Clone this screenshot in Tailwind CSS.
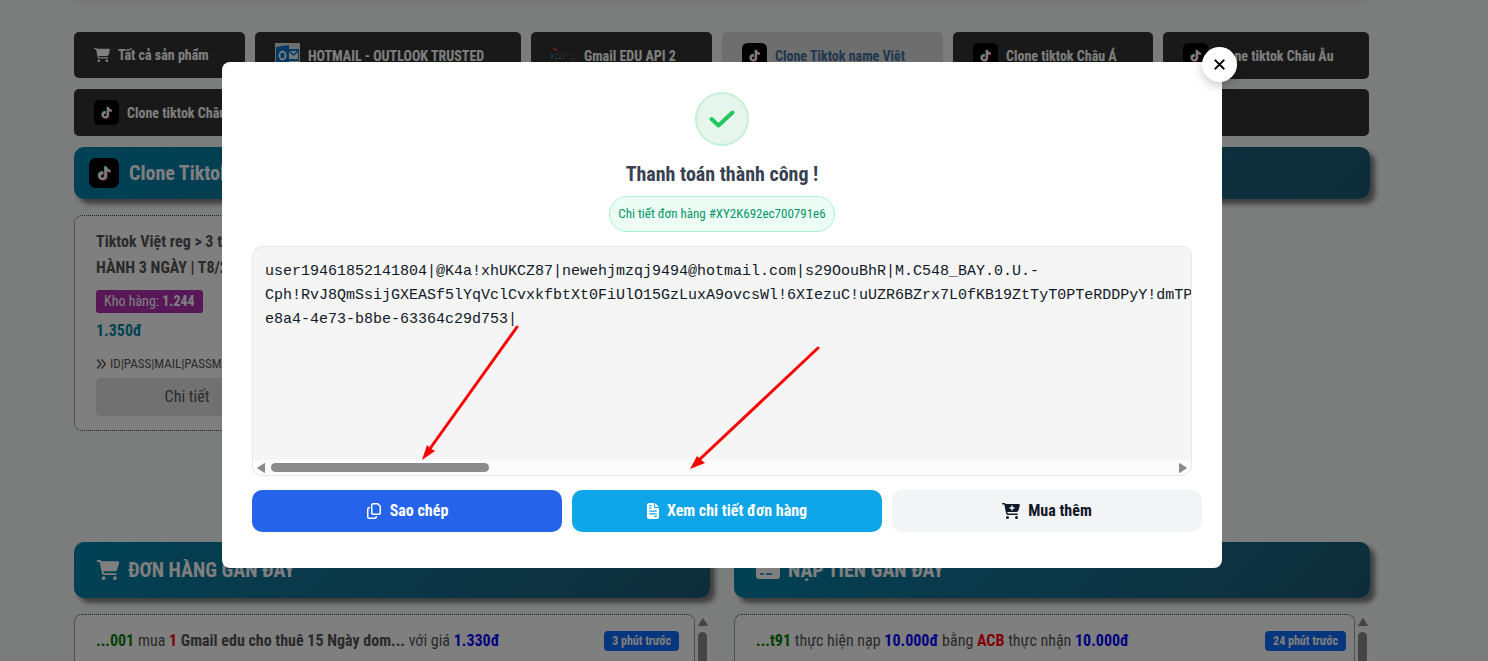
<!DOCTYPE html>
<html lang="vi">
<head>
  <meta charset="UTF-8" />
  <meta name="viewport" content="width=device-width, initial-scale=1.0"/>
  <title>Thanh toán thành công</title>
  <script src="https://cdn.jsdelivr.net/npm/@tailwindcss/browser@4"></script>
</head>
<body class="bg-[#f7faf8] font-['Liberation_Sans_Narrow','Roboto_Condensed',Roboto,sans-serif] text-base text-[#555] h-screen overflow-hidden">

  <!-- Shared icons -->
  <svg class="hidden">
    <symbol id="cart" viewBox="0 0 576 512"><path d="M0 24C0 10.7 10.7 0 24 0H69.5c22 0 41.5 12.8 50.6 32h411c26.3 0 45.5 25 38.6 50.4l-41 152.3c-8.5 31.4-37 53.3-69.5 53.3H170.7l5.4 28.5c2.2 11.3 12.1 19.5 23.6 19.5H488c13.3 0 24 10.7 24 24s-10.7 24-24 24H199.7c-34.6 0-64.3-24.6-70.7-58.5L77.4 54.5c-.7-3.8-4-6.5-7.9-6.5H24C10.7 48 0 37.3 0 24zM128 464a48 48 0 1 1 96 0 48 48 0 1 1 -96 0zm336-48a48 48 0 1 1 0 96 48 48 0 1 1 0-96z"/></symbol>
    <symbol id="note" viewBox="0 0 24 24"><path d="M12.525.02c1.31-.02 2.61-.01 3.91-.02.08 1.53.63 3.09 1.75 4.17 1.12 1.11 2.7 1.62 4.24 1.79v4.03c-1.44-.05-2.89-.35-4.2-.97-.57-.26-1.1-.59-1.62-.93-.01 2.92.01 5.84-.02 8.75-.08 1.4-.54 2.79-1.35 3.94-1.31 1.92-3.58 3.17-5.91 3.21-1.43.08-2.86-.31-4.08-1.03-2.02-1.19-3.44-3.37-3.65-5.71-.02-.5-.03-1-.01-1.49.18-1.9 1.12-3.72 2.58-4.96 1.66-1.44 3.98-2.13 6.15-1.72.02 1.48-.04 2.96-.04 4.44-.99-.32-2.15-.23-3.02.37-.63.41-1.11 1.04-1.36 1.75-.21.51-.15 1.07-.14 1.61.24 1.64 1.82 3.02 3.5 2.87 1.12-.01 2.19-.66 2.77-1.61.19-.33.4-.67.41-1.06.1-1.79.06-3.57.07-5.36.01-4.03-.01-8.05.02-12.07z"/></symbol>
    <symbol id="tiktok" viewBox="0 0 50 50">
      <rect width="50" height="50" rx="11" fill="#000"/>
      <use href="#note" x="13" y="13" width="23" height="23" fill="#25f4ee"/>
      <use href="#note" x="15" y="15" width="23" height="23" fill="#fe2c55"/>
      <use href="#note" x="14" y="14" width="23" height="23" fill="#fff"/>
    </symbol>
    <symbol id="arrow-up" viewBox="0 0 10 8"><path d="M5 0.500L9.500 7.500H0.500Z" stroke="currentColor" stroke-linejoin="round" fill="currentColor"/></symbol>
  </svg>

  <main class="h-full flex flex-col pl-[74px] pr-[118px]">
    <div class="h-0 mb-8 mx-1 shrink-0 shadow-[0_0_8px_1px_rgba(0,0,0,0.25)]"></div>

    <!-- Category tabs -->
    <nav class="mr-px shrink-0 grid grid-cols-[171fr_266fr_181fr_221fr_200fr_206fr] gap-[10px] text-sm font-bold text-white whitespace-nowrap">
      <a href="#" class="flex items-center gap-2 h-[46px] px-5 rounded-[5px] bg-[#333]">
        <svg class="w-4 h-4 fill-current"><use href="#cart"/></svg>Tất cả sản phẩm
      </a>
      <a href="#" class="flex items-center gap-2 h-[47px] px-5 rounded-[5px] bg-[#333]">
        <svg class="w-[25px] h-[25px]" viewBox="0 0 25 25">
          <rect width="25" height="25" fill="#ddd"/>
          <rect x="11" y="6" width="13" height="12" fill="#0a72c8"/>
          <path d="M14 8h9v8h-9z" fill="#e8eef5"/><path d="M14 8l4.500 4L23 8" stroke="#0a72c8" fill="none" stroke-width="1.500"/>
          <path d="M1 4L14 2V23L1 21Z" fill="#0a72c8"/>
          <ellipse cx="7.500" cy="12.500" rx="3" ry="4" stroke="#fff" stroke-width="1.800" fill="none"/>
        </svg>HOTMAIL - OUTLOOK TRUSTED
      </a>
      <a href="#" class="flex items-center gap-2 h-[47px] px-5 rounded-[5px] bg-[#333]">
        <svg class="w-[25px] h-[25px]" viewBox="0 0 25 25">
          <path d="M2 5h2v2H2z" fill="#d33"/><path d="M4 6h2v2H4z" fill="#c62"/><path d="M0 10l2 2v3H0z" fill="#27c"/>
          <path d="M3 11h6M11 11h10" stroke="#555" stroke-width="1"/><path d="M5 13h11" stroke="#444"/>
          <path d="M4 15.500h2M8 15.500h2M12 15.500h1" stroke="#5a8"/><path d="M20 16h4" stroke="#474"/>
        </svg>Gmail EDU API 2
      </a>
      <a href="#" class="flex items-center gap-2 h-[47px] px-5 rounded-[5px] bg-[#ddd] text-[#3e6f9c]">
        <svg class="w-[25px] h-[25px]"><use href="#tiktok"/></svg>Clone Tiktok name Việt
      </a>
      <a href="#" class="flex items-center gap-2 h-[47px] px-5 rounded-[5px] bg-[#333]">
        <svg class="w-[25px] h-[25px]"><use href="#tiktok"/></svg>Clone tiktok Châu Á
      </a>
      <a href="#" class="flex items-center gap-2 h-[47px] px-5 rounded-[5px] bg-[#333]">
        <svg class="w-[25px] h-[25px]"><use href="#tiktok"/></svg>Clone tiktok Châu Âu
      </a>
      <a href="#" class="col-span-6 flex items-center gap-2 h-[47px] px-5 rounded-[5px] bg-[#333]">
        <svg class="w-[25px] h-[25px]"><use href="#tiktok"/></svg>Clone tiktok Châu Mỹ
      </a>
    </nav>

    <h2 class="mt-[11px] shrink-0 flex items-center gap-[10px] h-[52px] px-[15px] rounded-[10px] bg-linear-135 from-[#0083ab] to-[#1c5a73] text-xl font-bold text-white shadow-[5px_5px_5px_rgba(0,0,0,0.5)]">
      <svg class="w-[30px] h-[30px]"><use href="#tiktok"/></svg>Clone Tiktok name Việt
    </h2>

    <!-- Product -->
    <article class="mt-4 w-1/4 h-[216px] shrink-0 px-[21px] pt-[13px] rounded-lg border border-dotted border-[#444] bg-white">
      <h3 class="font-bold leading-[26px] text-[#555] whitespace-nowrap">Tiktok Việt reg &gt; 3 tháng<br>HÀNH 3 NGÀY | T8/2025</h3>
      <p class="mt-[9px] flex"><span class="h-[23px] px-2 rounded-[3px] bg-[#b030b0] text-sm leading-[22px] text-white">Kho hàng: <b>1.244</b></span></p>
      <p class="mt-[6px] leading-6 font-bold text-[#0083a8]">1.350đ</p>
      <p class="mt-[11px] flex items-center gap-1 leading-5 text-[13px] whitespace-nowrap">
        <svg class="w-[10px] h-[10px]" viewBox="0 0 10 10" fill="none" stroke="currentColor" stroke-width="1.500"><path d="M1 .5L5 5L1 9.500M5.500 .5L9.500 5L5.500 9.500"/></svg>ID|PASS|MAIL|PASSMAIL
      </p>
      <button class="mt-1 w-[182px] h-[38px] rounded-[5px] bg-[#e2e2e2]">Chi tiết</button>
    </article>

    <!-- Recent activity -->
    <div class="mt-[111px] grow min-h-0 grid grid-cols-2 gap-6">
      <section class="min-h-0 flex flex-col">
        <h2 class="shrink-0 flex items-center gap-2 h-14 px-[22px] rounded-[10px] bg-linear-135 from-[#0083ab] to-[#1c5a73] text-xl font-bold text-white shadow-[5px_5px_5px_rgba(0,0,0,0.5)]">
          <svg class="w-6 h-5 fill-current"><use href="#cart"/></svg>ĐƠN HÀNG GẦN ĐÂY
        </h2>
        <div class="mt-4 grow min-h-0 flex">
          <div class="grow px-[21px] pr-[15px] pt-4 rounded-t-lg border border-b-0 border-dotted border-[#444] bg-white">
            <p class="flex items-center justify-between leading-5 whitespace-nowrap">
              <span><b class="text-[#008000]">...001</b> mua <b class="text-[#f00]">1</b> <b>Gmail edu cho thuê 15 Ngày dom...</b> với giá <b class="text-[#00f]">1.330đ</b></span>
              <span class="px-2 rounded bg-[#0d6efd] text-xs leading-5 font-bold text-white">3 phút trước</span>
            </p>
          </div>
          <div class="w-[15px] pt-1 flex flex-col items-center gap-[6px] bg-[#fafafa] text-[#8b8b8b]">
            <svg class="w-[10px] h-2 shrink-0"><use href="#arrow-up"/></svg>
            <div class="w-[9px] grow rounded-t-full bg-[#8b8b8b]"></div>
          </div>
        </div>
      </section>
      <section class="min-h-0 flex flex-col">
        <h2 class="shrink-0 flex items-center gap-2 h-14 px-[22px] rounded-[10px] bg-linear-135 from-[#0083ab] to-[#1c5a73] text-xl font-bold text-white shadow-[5px_5px_5px_rgba(0,0,0,0.5)]">
          <svg class="w-6 h-5" viewBox="0 0 24 20"><rect y="1" width="24" height="18" rx="3" fill="#fff"/><path d="M0 6h24" stroke="#06799c" stroke-width="2"/><path d="M4 14h4M10 14h6" stroke="#06799c" stroke-width="1.500"/></svg>NẠP TIỀN GẦN ĐÂY
        </h2>
        <div class="mt-4 grow min-h-0 flex">
          <div class="grow px-[21px] pr-2 pt-4 rounded-t-lg border border-b-0 border-dotted border-[#444] bg-white">
            <p class="flex items-center justify-between leading-5 whitespace-nowrap">
              <span><b class="text-[#008000]">...t91</b> thực hiện nạp <b class="text-[#00f]">10.000đ</b> bằng <b class="text-[#f00]">ACB</b> thực nhận <b class="text-[#00f]">10.000đ</b></span>
              <span class="px-2 rounded bg-[#0d6efd] text-xs leading-5 font-bold text-white">24 phút trước</span>
            </p>
          </div>
          <div class="w-[15px] pt-1 flex flex-col items-center gap-[6px] bg-[#fafafa] text-[#8b8b8b]">
            <svg class="w-[10px] h-2 shrink-0"><use href="#arrow-up"/></svg>
            <div class="w-[9px] grow rounded-t-full bg-[#8b8b8b]"></div>
          </div>
        </div>
      </section>
    </div>
  </main>

  <!-- Payment success dialog -->
  <div class="fixed inset-0 flex items-start justify-center pt-[62px] pr-11 bg-black/50">
    <div role="dialog" aria-labelledby="dialog-title" class="relative w-full max-w-[1000px] px-[30px] pt-[30px] pb-9 flex flex-col items-center rounded-lg bg-white">
      <button aria-label="Đóng" class="absolute -top-[15px] -right-[15px] w-[35px] h-[35px] flex items-center justify-center rounded-full bg-white text-black shadow-[0_4px_10px_rgba(0,0,0,0.2)]">
        <svg class="w-[11px] h-[11px]" viewBox="0 0 12 12" fill="none" stroke="currentColor" stroke-width="2.200" stroke-linecap="round"><path d="M1.500 1.500L10.500 10.500M10.500 1.500L1.500 10.500"/></svg>
      </button>

      <div class="w-[54px] h-[54px] flex items-center justify-center rounded-full border-2 border-[#c5f0d8] bg-[#e7f6ed]">
        <svg class="w-[26px] h-[18px]" viewBox="0 0 26 18" fill="none" stroke="#22c55e" stroke-width="4" stroke-linecap="round" stroke-linejoin="round"><path d="M2.500 9L9.500 15.500L23.500 2.500"/></svg>
      </div>
      <h1 id="dialog-title" class="mt-[14px] text-xl leading-7 font-bold text-[#374151]">Thanh toán thành công !</h1>
      <p class="mt-2 h-9 px-2 flex items-center rounded-full border border-[#a7f3d0] bg-[#ecfdf5] text-[13px] text-[#059669]">Chi tiết đơn hàng #XY2K692ec700791e6</p>

      <div class="mt-[14px] w-full rounded-[10px] border border-[#e5e7eb] bg-[#f5f5f5] overflow-hidden">
        <textarea readonly wrap="off" aria-label="Dữ liệu đơn hàng" class="block w-full h-[213px] px-3 pt-[13px] resize-none overflow-hidden outline-none font-['Liberation_Mono',monospace] text-[15px] leading-6 text-[#111827]">user19461852141804|@K4a!xhUKCZ87|newehjmzqj9494@hotmail.com|s29OouBhR|M.C548_BAY.0.U.-
Cph!RvJ8QmSsijGXEASf5lYqVclCvxkfbtXt0FiUlO15GzLuxA9ovcsWl!6XIezuC!uUZR6BZrx7L0fKB19ZtTyT0PTeRDDPyY!dmTPIMw
e8a4-4e73-b8be-63364c29d753|</textarea>
        <div class="flex items-center gap-[6px] h-[15px] px-1 bg-[#fcfcfc] text-[#8b8b8b]">
          <svg class="w-2 h-[10px] -rotate-180" viewBox="0 0 8 10"><path d="M.5 .5L7.500 5L.5 9.500Z" stroke="currentColor" stroke-linejoin="round" fill="currentColor"/></svg>
          <div class="w-[218px] h-[9px] rounded-full bg-[#8b8b8b]"></div>
          <svg class="ml-auto w-2 h-[10px]" viewBox="0 0 8 10"><path d="M.5 .5L7.500 5L.5 9.500Z" stroke="currentColor" stroke-linejoin="round" fill="currentColor"/></svg>
        </div>
      </div>

      <div class="mt-[14px] -mr-[10px] self-stretch grid grid-cols-3 gap-[10px] font-bold">
        <button class="h-[42px] flex items-center justify-center gap-2 rounded-[10px] bg-[#2563eb] text-white">
          <svg class="w-4 h-4 fill-current" viewBox="0 0 448 512"><path d="M384 336H192c-8.800 0-16-7.200-16-16V64c0-8.800 7.200-16 16-16l140.100 0L400 115.900V320c0 8.800-7.200 16-16 16zM192 384H384c35.300 0 64-28.700 64-64V115.900c0-12.700-5.100-24.900-14.100-33.900L366.100 14.100c-9-9-21.200-14.100-33.900-14.100H192c-35.300 0-64 28.700-64 64V320c0 35.300 28.700 64 64 64zM64 128c-35.300 0-64 28.700-64 64V448c0 35.300 28.700 64 64 64H256c35.300 0 64-28.700 64-64V416H272v32c0 8.800-7.200 16-16 16H64c-8.800 0-16-7.200-16-16V192c0-8.800 7.200-16 16-16H96V128H64z"/></svg>Sao chép
        </button>
        <button class="h-[42px] flex items-center justify-center gap-2 rounded-[10px] bg-[#0ea5e9] text-white">
          <svg class="w-3 h-4 fill-current" viewBox="0 0 384 512"><path d="M64 0C28.700 0 0 28.700 0 64L0 448c0 35.300 28.700 64 64 64l256 0c35.300 0 64-28.700 64-64l0-288-128 0c-17.700 0-32-14.300-32-32L224 0 64 0zM256 0l0 128 128 0L256 0z"/><path d="M72 80h72M72 164h72M72 260h240M72 344h240M232 428h80" stroke="#0ea5e9" stroke-width="40"/></svg>Xem chi tiết đơn hàng
        </button>
        <button class="h-[42px] flex items-center justify-center gap-2 rounded-[10px] bg-[#f3f4f6] text-[#111827]">
          <svg class="w-[18px] h-4 fill-current" viewBox="0 0 576 512"><use href="#cart" width="576" height="512"/><path d="M320 80v160M240 160h160" stroke="#f3f4f6" stroke-width="44"/></svg>Mua thêm
        </button>
      </div>

      <!-- Pointers to the scrollbar and buttons -->
      <svg class="absolute inset-0 w-full h-full pointer-events-none" viewBox="222 62 1000 506" fill="#f00" stroke="#f00" stroke-width="3" stroke-linecap="round">
        <path d="M517 327L429 450M818 348L699 460"/>
        <path stroke="none" d="M422 460L427 445L430 448L435 451ZM690 469L697 456L700 459L705 463Z"/>
      </svg>
    </div>
  </div>
</body>
</html>
